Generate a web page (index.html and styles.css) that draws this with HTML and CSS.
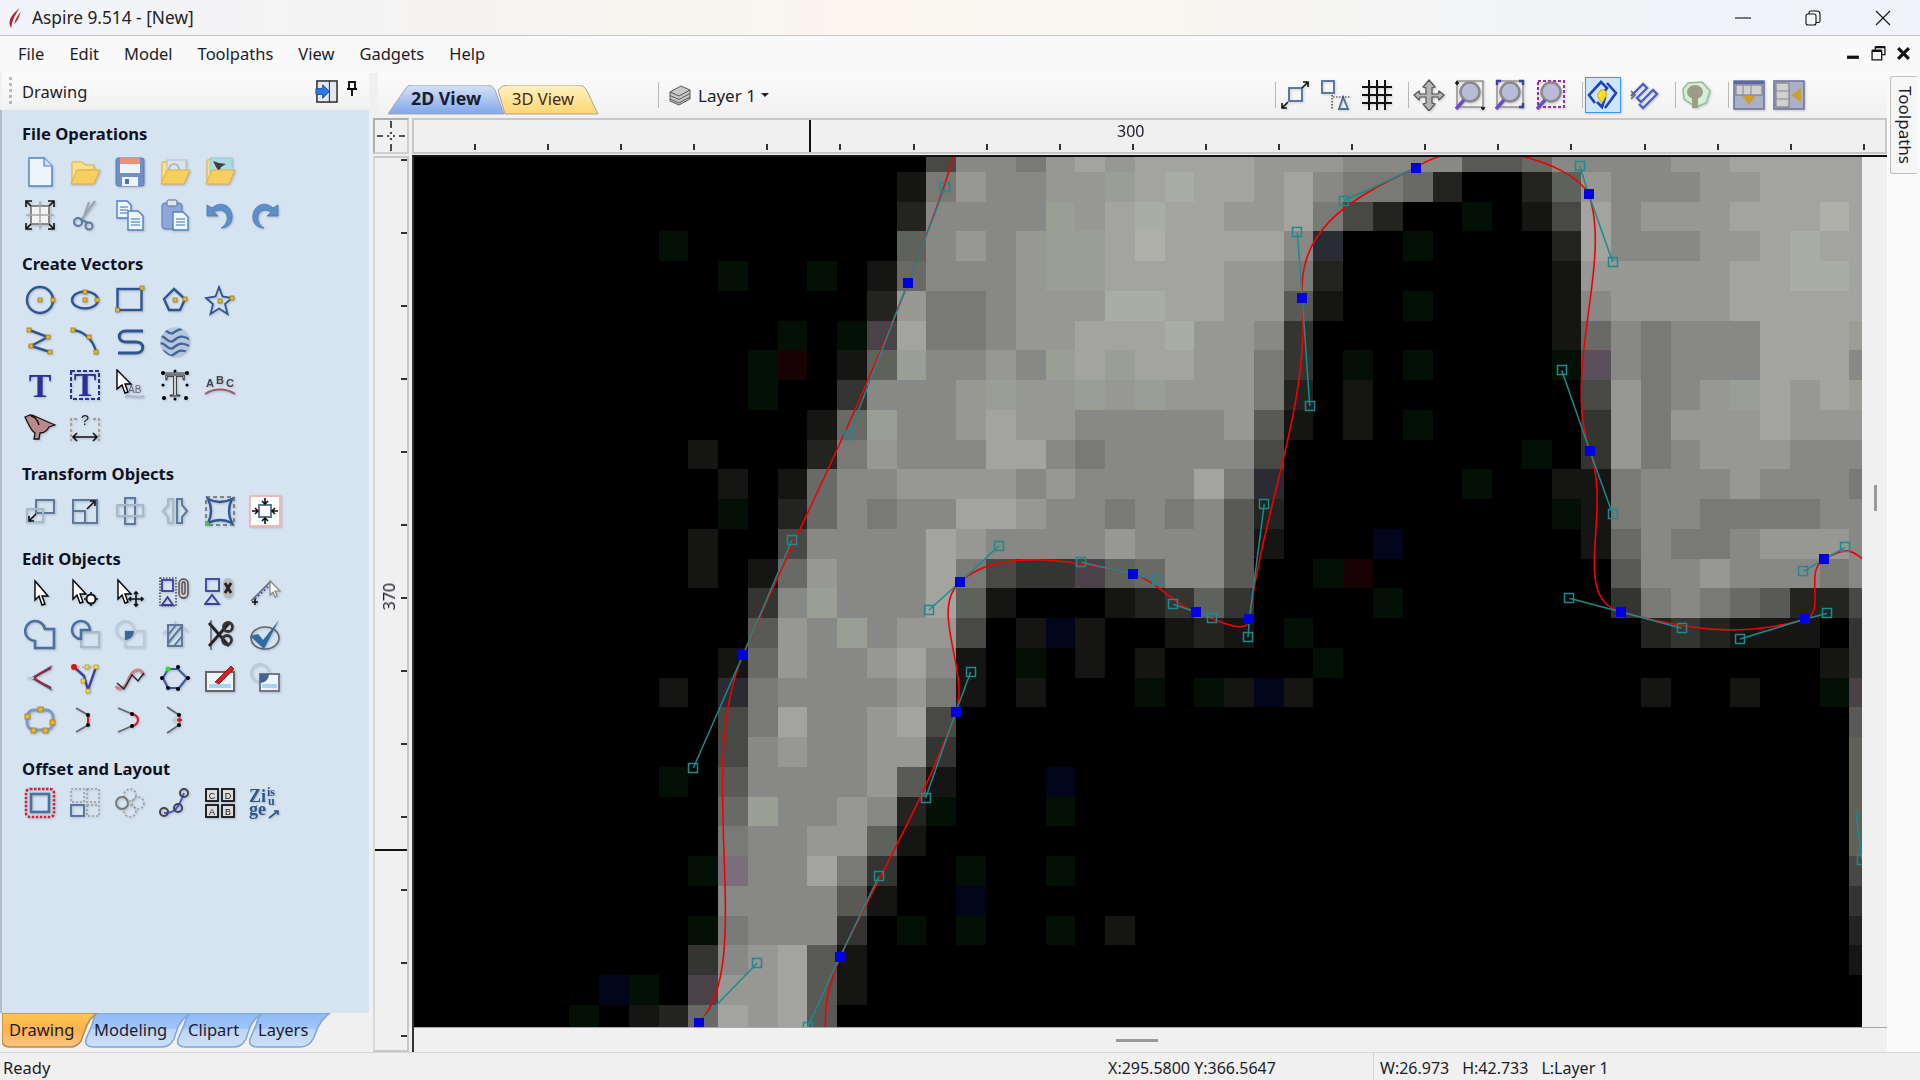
FILE: index.html
```html
<!DOCTYPE html>
<html>
<head>
    <title>Aspire 9.514 - [New]</title>
    <link rel="stylesheet" href="styles.css">
</head>
<body>
<div class="app">
    <div class="titlebar">
        <svg class="app-icon" viewBox="0 0 14 22"><path d="M12 0C7 4 2 9 1 15c-.4 2.500 .5 5 2 7C3 17 6 9 12 0z"/><path d="M13 4C10 8 7 13 6 18c3-3 6-8 7-14z"/></svg>
        <span class="app-title">Aspire 9.514 - [New]</span>
        <div class="win-btns">
            <svg class="win-min" viewBox="0 0 16 16"><path d="M0 8h16"/></svg>
            <svg class="win-max" viewBox="0 0 16 16"><rect x="1" y="4" width="10" height="11" rx="2"/><path d="M4 4V3c0-1 .8-2 2-2h6c1.500 0 3 1 3 3v7c0 1-.8 1.500-2 1.500h-2"/></svg>
            <svg class="win-close" viewBox="0 0 16 16"><path d="M1 1l14 14M15 1L1 15"/></svg>
        </div>
    </div>

    <div class="menubar">
        <span>File</span><span>Edit</span><span>Model</span><span>Toolpaths</span><span>View</span><span>Gadgets</span><span>Help</span>
        <div class="mdi-btns">
            <svg viewBox="0 0 14 14"><rect x="1" y="9" width="11" height="3" class="fill-dark"/></svg>
            <svg viewBox="0 0 14 14"><path d="M4 3.500V1h9v7h-2.500M1 4.500h9V13H1z" class="line-dark"/><path d="M4 1h9M1 4.500h9" class="line-thick"/></svg>
            <svg viewBox="0 0 14 14"><path d="M2 2l10 10M12 2L2 12" class="line-x"/></svg>
        </div>
    </div>

    <div class="workspace">
        <div class="left">
            <div class="panel-head">
                <span class="grip"></span>
                <span class="panel-name">Drawing</span>
                <svg class="head-ic" viewBox="0 0 24 24"><rect x="2" y="1" width="21" height="22" class="box"/><path d="M15 1v22" class="boxline"/><path d="M1 9h7V5l7 7-7 7v-4H1z" class="arrow-blue"/></svg>
                <svg class="pin-ic" viewBox="0 0 12 16"><path d="M3 1h6v7H3zM1 8h10M6 8v7" class="line-pin"/></svg>
            </div>
            <div class="panel-body">
                <div class="sec sec-file">
                    <div class="sec-title">File Operations</div>
                    <div class="icons">
                        <svg class="ic" viewBox="0 0 32 32"><path d="M5 2h15l8 8v20H5z" class="doc"/><path d="M20 2v8h8" class="doc-fold"/></svg>
                        <svg class="ic" viewBox="0 0 32 32"><path d="M3 27V6h10l3 3h9v5H9z" class="folder-back"/><path d="M2 28l6-14h23l-6 14z" class="folder"/></svg>
                        <svg class="ic" viewBox="0 0 32 32"><rect x="2" y="2" width="28" height="28" rx="2" class="floppy"/><rect x="6" y="2" width="20" height="6" class="floppy-red"/><rect x="6" y="8" width="20" height="9" class="floppy-white"/><rect x="8" y="21" width="16" height="9" class="floppy-white"/><rect x="11" y="23" width="4" height="5" class="floppy-dark"/></svg>
                        <svg class="ic" viewBox="0 0 32 32"><path d="M3 27V6h10l3 3h9v5H9z" class="folder-back"/><rect x="8" y="4" width="19" height="14" class="pic-pale"/><circle cx="15" cy="13" r="5" class="ring-grey"/><path d="M2 28l6-14h23l-6 14z" class="folder"/></svg>
                        <svg class="ic" viewBox="0 0 32 32"><path d="M3 27V4h10l3 3h9v7H9z" class="folder-back"/><rect x="6" y="2" width="22" height="15" class="pic-sky"/><path d="M9 5l6 2 7 1-5 3-2 5-3-5z" class="bird-dark"/><path d="M2 28l6-14h23l-6 14z" class="folder"/></svg>
                        <span></span>

                        <svg class="ic" viewBox="0 0 32 32"><rect x="7" y="7" width="18" height="18" class="sel-box"/><path d="M16 2v28M2 16h28" class="sel-grid"/><path d="M2 8V2h6M24 2h6v6M30 24v6h-6M8 30H2v-6M2 2l5 5M30 2l-5 5M30 30l-5-5M2 30l5-5" class="s-black"/></svg>
                        <svg class="ic" viewBox="0 0 32 32"><path d="M26 2L13 20M20 3l-6 17" class="blade"/><circle cx="9" cy="23" r="4" class="s-steel"/><circle cx="20" cy="27" r="3.500" class="s-steel"/><path d="M11 20l8 4" class="s-steel"/></svg>
                        <svg class="ic" viewBox="0 0 32 32"><path d="M3 2h10l4 4v13H3z" class="doc"/><path d="M6 8h8M6 11h8M6 14h8" class="s-doc"/><path d="M14 12h10l5 5v14H14z" class="doc"/><path d="M17 20h9M17 23h9M17 26h9" class="s-doc"/></svg>
                        <svg class="ic" viewBox="0 0 32 32"><rect x="3" y="4" width="20" height="26" rx="3" class="clip"/><rect x="8" y="1" width="10" height="6" rx="1.500" class="clip-top"/><path d="M14 13h10l5 5v13H14z" class="doc"/><path d="M17 20h9M17 23h9M17 26h9" class="s-doc"/></svg>
                        <svg class="ic" viewBox="0 0 32 32"><path d="M3 6v11h11l-4-4c6-4 12-1 13 4 1 5-2 10-6 12 8 0 12-6 11-13C27 7 17 1 8 9z" class="undo"/></svg>
                        <svg class="ic" viewBox="0 0 32 32"><path d="M29 6v11H18l4-4c-6-4-12-1-13 4-1 5 2 10 6 12-8 0-12-6-11-13C5 7 15 1 24 9z" class="undo"/></svg>
                    </div>
                </div>

                <div class="sec sec-create">
                    <div class="sec-title">Create Vectors</div>
                    <div class="icons">
                        <svg class="ic" viewBox="0 0 32 32"><circle cx="16" cy="16" r="13" class="s-blue"/><rect x="14" y="14" width="4" height="4" class="node"/><rect x="27" y="14" width="4" height="4" class="node"/></svg>
                        <svg class="ic" viewBox="0 0 32 32"><ellipse cx="16" cy="16" rx="13" ry="8.500" class="s-blue"/><rect x="14" y="14" width="4" height="4" class="node"/><rect x="14" y="6" width="4" height="4" class="node"/><rect x="26" y="14" width="4" height="4" class="node"/></svg>
                        <svg class="ic" viewBox="0 0 32 32"><rect x="3.500" y="5" width="24" height="21" class="s-blue"/><rect x="1.500" y="24" width="4" height="4" class="node"/><rect x="26" y="2" width="4" height="4" class="node"/></svg>
                        <svg class="ic" viewBox="0 0 32 32"><path d="M15 5l11 10-5 11H10L5 15z" class="s-blue"/><rect x="14" y="14" width="4" height="4" class="node"/><rect x="24" y="13" width="4" height="4" class="node"/></svg>
                        <svg class="ic" viewBox="0 0 32 32"><path d="M15 3l3.500 9.500L28 14l-7 6 2.500 10L15 24.500 6.500 30 9 20l-7-6 9.500-1.500z" class="s-blue-star"/><rect x="14" y="15" width="4" height="4" class="node"/><rect x="26" y="12" width="4" height="4" class="node"/></svg>
                        <span></span>

                        <svg class="ic" viewBox="0 0 32 32"><path d="M5 4l19 7L7 20l19 6" class="s-blue"/><rect x="3" y="2" width="4" height="4" class="node"/><rect x="22" y="9" width="4" height="4" class="node"/><rect x="5" y="18" width="4" height="4" class="node"/><rect x="24" y="24" width="4" height="4" class="node"/></svg>
                        <svg class="ic" viewBox="0 0 32 32"><path d="M4 4c9 1 20 8 23 22" class="s-blue"/><rect x="2" y="2" width="4" height="4" class="node"/><rect x="18" y="9" width="4" height="4" class="node"/><rect x="25" y="24" width="4" height="4" class="node"/></svg>
                        <svg class="ic" viewBox="0 0 32 32"><path d="M29 5H12C3 5 3 16 12 16h10c9 0 9 11 0 11H4" class="s-thick"/></svg>
                        <svg class="ic" viewBox="0 0 32 32"><defs><clipPath id="wave-clip"><circle cx="16" cy="16" r="14.500"/></clipPath></defs><g clip-path="url(#wave-clip)"><rect width="32" height="32" class="wave-bg"/><path d="M0 5c5-6 9 5 14 2s8-7 18-1M0 12c5-6 9 7 14 3s8-7 18-1M0 19c5-6 9 7 14 3s8-7 18-1M0 26c5-6 9 7 14 3s8-7 18-1" class="s-wave"/></g></svg>
                        <span></span><span></span>

                        <svg class="ic" viewBox="0 0 32 32"><text x="16" y="28" class="t-big">T</text></svg>
                        <svg class="ic" viewBox="0 0 32 32"><rect x="2" y="2" width="28" height="28" class="s-dash"/><text x="16" y="27" class="t-big">T</text></svg>
                        <svg class="ic" viewBox="0 0 32 32"><path d="M3 1v19l5-4 3 8 3-1-3-8h6z" class="ptr"/><text x="14" y="24" class="t-ab">AB</text><path d="M11 28c6-3 10 2 19-1" class="s-pale"/></svg>
                        <svg class="ic" viewBox="0 0 32 32"><path d="M4 4h24" class="s-thin"/><text x="16" y="27" class="t-outline">T</text><circle cx="4" cy="4" r="2" class="dot"/><circle cx="16" cy="2" r="1.500" class="dot"/><circle cx="28" cy="4" r="2" class="dot"/><circle cx="4" cy="16" r="1.500" class="dot"/><circle cx="28" cy="16" r="1.500" class="dot"/><circle cx="5" cy="29" r="2" class="dot"/><circle cx="16" cy="30" r="1.500" class="dot"/><circle cx="27" cy="29" r="2" class="dot"/></svg>
                        <svg class="ic" viewBox="0 0 32 32"><text x="2" y="18" class="t-abc">A</text><text x="12" y="15" class="t-abc">B</text><text x="22" y="18" class="t-abc">C</text><path d="M1 25c9-6 21-6 30 0" class="s-arc"/></svg>
                        <span></span>

                        <svg class="ic" viewBox="0 0 32 32"><path d="M1 6l5-2c4 0 6 2 9 3l9 4 7 3-6 2c-2 4-5 6-9 6l-1 6h-5l1-6C7 20 4 12 1 6z" class="bird"/><path d="M7 5c4 1 7 5 8 9" class="s-black"/></svg>
                        <svg class="ic" viewBox="0 0 32 32"><text x="16" y="14" class="t-q">?</text><path d="M2 15V8h7M30 15V8h-7M2 18v12M30 18v12" class="s-brown"/><path d="M4 26h24M8 22l-4 4 4 4M24 22l4 4-4 4" class="s-black"/></svg>
                    </div>
                </div>

                <div class="sec sec-transform">
                    <div class="sec-title">Transform Objects</div>
                    <div class="icons">
                        <svg class="ic" viewBox="0 0 32 32"><rect x="12" y="5" width="18" height="13" class="s-steel"/><rect x="3" y="14" width="16" height="13" class="s-pale"/><path d="M12 19l-7 7M5 21v5h5" class="s-black"/></svg>
                        <svg class="ic" viewBox="0 0 32 32"><rect x="4" y="5" width="24" height="23" class="s-steel"/><path d="M4 16h12v12" class="s-steel"/><path d="M18 14l8-8M21 6h5v5" class="s-black"/></svg>
                        <svg class="ic" viewBox="0 0 32 32"><rect x="11" y="3" width="10" height="26" class="s-steel"/><rect x="3" y="10" width="26" height="11" class="s-pale"/></svg>
                        <svg class="ic" viewBox="0 0 32 32"><path d="M14 4H9v6l-5 6 5 6v6h5z" class="s-pale"/><path d="M18 4h5v6l5 6-5 6v6h-5z" class="s-steel"/></svg>
                        <svg class="ic" viewBox="0 0 32 32"><rect x="2" y="2" width="28" height="28" class="s-greydash"/><path d="M4 4c8 4 16 4 24 0-4 8-4 16 0 24-8-4-16-4-24 0 4-8 4-16 0-24z" class="s-blue"/><rect x="1" y="27" width="4" height="4" class="green"/></svg>
                        <svg class="ic fit" viewBox="0 0 32 32"><rect x="1" y="1" width="30" height="30" class="fit-frame"/><rect x="10" y="10" width="12" height="12" class="s-steel"/><path d="M16 3v6M16 23v6M3 16h6M23 16h6M13 6l3 3 3-3M13 26l3-3 3 3M6 13l3 3-3 3M26 13l-3 3 3 3" class="s-black"/></svg>
                    </div>
                </div>

                <div class="sec sec-edit">
                    <div class="sec-title">Edit Objects</div>
                    <div class="icons">
                        <svg class="ic" viewBox="0 0 32 32"><path d="M11 4v19l4-4 3 9 3-1-3-8h6z" class="ptr"/></svg>
                        <svg class="ic" viewBox="0 0 32 32"><path d="M4 3v19l4-4 3 8 3-1-3-8h6z" class="ptr"/><circle cx="22" cy="22" r="4.500" class="s-blackw"/><path d="M22 15v3M22 26v3M15 22h3M26 22h3" class="s-black"/></svg>
                        <svg class="ic" viewBox="0 0 32 32"><path d="M4 3v19l4-4 3 8 3-1-3-8h6z" class="ptr"/><path d="M22 15v14M15 22h14M20 17l2-2 2 2M20 27l2 2 2-2M17 20l-2 2 2 2M27 20l2 2-2 2" class="s-black"/></svg>
                        <svg class="ic" viewBox="0 0 32 32"><rect x="1" y="1" width="16" height="28" class="s-dots"/><rect x="3" y="3" width="11" height="11" class="s-navy"/><path d="M3 28l5.500-8 5.500 8z" class="s-navy"/><rect x="20" y="2" width="9" height="19" rx="4.500" class="s-chain"/><rect x="23" y="5" width="3" height="12" rx="1.500" class="s-chain"/></svg>
                        <svg class="ic" viewBox="0 0 32 32"><rect x="2" y="2" width="13" height="12" class="s-navy"/><path d="M1 27l7-9 7 9z" class="s-navy"/><rect x="19" y="1" width="10" height="20" rx="5" class="chain-bg"/><path d="M21 6l6 10M27 6l-6 10" class="s-heavy"/></svg>
                        <svg class="ic" viewBox="0 0 32 32"><path d="M2 24L22 4" class="s-grey"/><path d="M6 22L20 9" class="s-bluedash"/><path d="M6 22v6M3 25h6" class="s-black"/><path d="M21 4v14l3-3 2 5 2-1-2-5h5z" class="ptr-grey"/></svg>

                        <svg class="ic" viewBox="0 0 32 32"><path d="M11 22a10 10 0 1 1 10-12h9v19H11z" class="s-steelb"/></svg>
                        <svg class="ic" viewBox="0 0 32 32"><rect x="12" y="13" width="18" height="15" class="s-pale"/><path d="M12 20a9 9 0 1 1 9-9h-9z" class="s-steelb"/></svg>
                        <svg class="ic" viewBox="0 0 32 32"><circle cx="11" cy="11" r="9" class="s-paler"/><rect x="11" y="12" width="19" height="16" class="s-paler"/><path d="M11 12h9c0 5-4 9-9 9z" class="s-steelf"/></svg>
                        <svg class="ic" viewBox="0 0 32 32"><rect x="9" y="6" width="14" height="21" class="s-steel"/><path d="M9 16l8-10M9 24l14-17M15 27l8-10" class="s-steel"/><path d="M4 15l3-3M25 9l4 4M16 2v3" class="s-paler"/></svg>
                        <svg class="ic" viewBox="0 0 32 32"><path d="M5 4l20 23M26 3L5 27" class="s-heavy"/><circle cx="24" cy="8" r="4.500" class="s-pink"/><circle cx="23" cy="21" r="4.500" class="s-pink"/><path d="M7 1v30" class="s-thin"/></svg>
                        <svg class="ic" viewBox="0 0 32 32"><ellipse cx="16" cy="19" rx="14" ry="11" class="s-grey"/><path d="M1 17l8-2 5 6L30 1 15 30z" class="check"/></svg>

                        <svg class="ic" viewBox="0 0 32 32"><path d="M28 4L8 16l20 12" class="s-steel"/><path d="M27 6C20 10 14 12 10 16c4 4 10 6 17 10" class="s-maroon"/><path d="M10 16H3" class="s-paler"/></svg>
                        <svg class="ic" viewBox="0 0 32 32"><path d="M5 5l10 9 4 14L27 5" class="s-navyb"/><path d="M5 5h22" class="s-reddash"/><circle cx="5" cy="5" r="3" class="red-dot"/><rect x="16" y="3" width="4" height="4" class="ynode"/><rect x="25" y="3" width="4" height="4" class="ynode"/><rect x="12" y="17" width="4" height="4" class="ynode"/><rect x="17" y="27" width="4" height="4" class="ynode"/></svg>
                        <svg class="ic" viewBox="0 0 32 32"><path d="M2 24c3 5 8 3 11-3 2-5 4-12 11-13 3 0 5 3 6 6" class="s-pinkw"/><path d="M3 21l7 6 8-14 6 6 6-8" class="s-thin2"/></svg>
                        <svg class="ic" viewBox="0 0 32 32"><path d="M4 16l5-9h10l9 9-8 10h-11z" class="s-navyw"/><circle cx="9" cy="7" r="2.500" class="green-dot"/><circle cx="19" cy="5" r="2" class="dot"/><circle cx="29" cy="16" r="2" class="dot"/><circle cx="19" cy="27" r="2" class="dot"/><circle cx="9" cy="26" r="2" class="dot"/><circle cx="3" cy="16" r="2" class="dot"/></svg>
                        <svg class="ic" viewBox="0 0 32 32"><rect x="2" y="10" width="28" height="19" class="pic-frame"/><rect x="5" y="22" width="22" height="4" class="pic-band"/><path d="M11 20L27 4l3 3-15 15z" class="pencil"/></svg>
                        <svg class="ic" viewBox="0 0 32 32"><circle cx="11" cy="11" r="9" class="s-paler"/><rect x="11" y="12" width="19" height="17" class="pic-frame2"/><rect x="13" y="22" width="15" height="4" class="pic-band"/><path d="M11 12h9c0 5-4 9-9 9z" class="s-steelf"/></svg>

                        <svg class="ic" viewBox="0 0 32 32"><rect x="3" y="6" width="26" height="20" rx="7" class="s-steelc"/><rect x="1" y="10" width="5" height="5" class="node"/><rect x="14" y="3" width="5" height="5" class="node"/><rect x="26" y="16" width="5" height="5" class="node"/><rect x="19" y="24" width="5" height="5" class="node"/><rect x="7" y="24" width="5" height="5" class="node"/></svg>
                        <svg class="ic" viewBox="0 0 32 32"><path d="M7 4l12 7M7 28l12-7" class="s-grey"/><path d="M19 11v10" class="s-red"/><circle cx="19" cy="11" r="2" class="dot"/><circle cx="19" cy="21" r="2" class="dot"/></svg>
                        <svg class="ic" viewBox="0 0 32 32"><path d="M4 4l14 6M4 28l14-6" class="s-grey"/><path d="M18 10c8 2 8 10 0 12" class="s-red"/><circle cx="18" cy="10" r="2" class="dot"/><circle cx="18" cy="22" r="2" class="dot"/></svg>
                        <svg class="ic" viewBox="0 0 32 32"><path d="M8 3l12 8M8 29l12-8" class="s-grey"/><path d="M20 11l-6 5 6 5" class="s-paler"/><circle cx="20" cy="11" r="2" class="dot"/><circle cx="20" cy="21" r="2" class="dot"/><path d="M23 16h-5M20.500 13.500v5" class="s-red"/></svg>
                        <span></span><span></span>
                    </div>
                </div>

                <div class="sec sec-offset">
                    <div class="sec-title">Offset and Layout</div>
                    <div class="icons">
                        <svg class="ic" viewBox="0 0 32 32"><rect x="2" y="2" width="28" height="28" rx="4" class="s-redfat"/><rect x="7" y="7" width="18" height="18" class="s-steelb"/></svg>
                        <svg class="ic" viewBox="0 0 32 32"><rect x="2" y="2" width="13" height="13" class="s-greydash2"/><rect x="18" y="2" width="12" height="13" class="s-greydash2"/><rect x="18" y="18" width="12" height="11" class="s-greydash2"/><rect x="2" y="18" width="13" height="11" class="s-steel2"/></svg>
                        <svg class="ic" viewBox="0 0 32 32"><circle cx="16" cy="8" r="6" class="s-greydash2"/><circle cx="16" cy="24" r="6" class="s-greydash2"/><circle cx="24" cy="16" r="6" class="s-greydash2"/><circle cx="8" cy="16" r="6" class="s-greyw"/></svg>
                        <svg class="ic" viewBox="0 0 32 32"><path d="M5 26c10 0 14-3 20-20" class="s-violet"/><circle cx="5" cy="25" r="4" class="s-ring"/><circle cx="19" cy="21" r="4" class="s-ring"/><circle cx="25" cy="6" r="4" class="s-ring"/></svg>
                        <svg class="ic" viewBox="0 0 32 32"><rect x="2" y="2" width="12" height="12" class="cd-box"/><rect x="18" y="2" width="12" height="12" class="cd-box"/><rect x="2" y="18" width="12" height="12" class="cd-box"/><rect x="18" y="18" width="12" height="12" class="cd-box"/><text x="8" y="11.500" class="t-tile">C</text><text x="24" y="11.500" class="t-tile">D</text><text x="8" y="27.500" class="t-tile">A</text><text x="24" y="27.500" class="t-tile">B</text></svg>
                        <svg class="ic" viewBox="0 0 32 32"><text x="0" y="15" class="t-zig">Zi</text><text x="18" y="9" class="t-zig2">is</text><text x="0" y="28" class="t-zig">ge</text><text x="19" y="18" class="t-zig2">u</text><path d="M20 31l9-7M25 24h4v4" class="s-blue-thin"/></svg>
                    </div>
                </div>
            </div>
            <svg class="panel-tabs" viewBox="0 0 340 39">
                <defs>
                    <linearGradient id="tab-blue" x1="0" y1="0" x2="0" y2="1"><stop offset="0" stop-color="#8ebbf8"/><stop offset=".46" stop-color="#a0c5f8"/><stop offset=".47" stop-color="#bcd4f6"/><stop offset="1" stop-color="#cfe0f7"/></linearGradient>
                    <linearGradient id="tab-orange" x1="0" y1="0" x2="0" y2="1"><stop offset="0" stop-color="#ffc656"/><stop offset=".5" stop-color="#ffb24c"/><stop offset="1" stop-color="#ffc583"/></linearGradient>
                </defs>
                <path d="M260 0h68q-8 6-12 14l-4 10q-4 10-14 10h-42q-10 0-8-8l6-14q2-8 6-12z" class="tab-b"/>
                <path d="M188 0h72q-8 6-12 14l-4 12q-4 8-12 8h-48q-10 0-8-8l6-14q2-8 6-12z" class="tab-b"/>
                <path d="M94 0h94q-8 6-12 14l-4 12q-4 8-12 8H92q-10 0-8-8l6-14q2-8 4-12z" class="tab-b"/>
                <path d="M0 0h95q-7 5-10 12l-6 16q-4 6-11 6H8q-8 0-8-7z" class="tab-o"/>
                <text x="7" y="23" class="tab-text">Drawing</text>
                <text x="92" y="23" class="tab-text">Modeling</text>
                <text x="186" y="23" class="tab-text">Clipart</text>
                <text x="256" y="23" class="tab-text">Layers</text>
            </svg>
        </div>

        <div class="main">
            <div class="view-toolbar">
                <svg class="view-tabs" viewBox="0 0 220 32">
                    <defs>
                        <linearGradient id="tab-2d" x1="0" y1="0" x2="0" y2="1"><stop offset="0" stop-color="#d6e2f8"/><stop offset="1" stop-color="#81a6e8"/></linearGradient>
                        <linearGradient id="tab-3d" x1="0" y1="0" x2="0" y2="1"><stop offset="0" stop-color="#fff1c4"/><stop offset="1" stop-color="#ffd672"/></linearGradient>
                    </defs>
                    <path d="M112 5q4-5 10-5h70q6 0 9 6l11 23H119z" class="tab-3d"/>
                    <path d="M2 29L20 3q2-3 6-3h74q6 0 9 5l9 24z" class="tab-2d"/>
                    <text x="25" y="20" class="tab-text tab-bold">2D View</text>
                    <text x="126" y="20" class="tab-text tab-brown">3D View</text>
                </svg>
                <span class="sep sep-layer"></span>
                <svg class="layer-ic" viewBox="0 0 24 22"><path d="M2 8l11-6 9 4v9l-11 6-9-4z" class="slab"/><path d="M2 8l9 4 11-6M2 11.500l9 4 11-6M2 15l9 4 11-6" class="slab-line"/></svg>
                <span class="layer-name">Layer 1</span>
                <span class="caret"></span>

                <span class="sep sep-tools"></span>
                <span class="tool"><svg class="ic-top" viewBox="0 0 32 32"><rect x="9" y="9" width="13" height="13" class="s-steel2"/><path d="M8 23l-6 6M2 24v5h5M22 9l6-6M23 3h5v5" class="s-black"/></svg></span>
                <span class="tool"><svg class="ic-top" viewBox="0 0 32 32"><rect x="2" y="2" width="12" height="12" class="s-steel2"/><path d="M19 30L23 18l5 12z" class="s-steel2"/><path d="M13 18h17M12 16v14" class="s-dots"/></svg></span>
                <span class="tool"><svg class="ic-top" viewBox="0 0 32 32"><path d="M8 1v30M16 1v30M24 1v30M1 8h30M1 16h30M1 24h30" class="s-grid"/></svg></span>
                <span class="sep"></span>
                <span class="tool"><svg class="ic-top" viewBox="0 0 32 32"><path d="M16 1l6 7-3 1v6h6l1-3 5 4-5 5-1-3h-6v6l3 1-6 7-6-7 3-1v-6H7l-1 3-5-5 5-4 1 3h6V9l-3-1z" class="pan"/></svg></span>
                <span class="tool"><svg class="ic-top" viewBox="0 0 32 32"><rect x="3" y="2" width="26" height="26" class="s-greyl"/><circle cx="16" cy="13" r="9.500" class="lens"/><path d="M10 21L2 30" class="handle"/><path d="M3 2v4M1 4h4M29 28v3M27 29h4" class="s-black"/></svg></span>
                <span class="tool"><svg class="ic-top" viewBox="0 0 32 32"><rect x="3" y="2" width="26" height="26" class="s-greyl"/><path d="M3 6V2h4M25 2h4v4M25 28h4v-4" class="s-navyb"/><circle cx="16" cy="13" r="9.500" class="lens"/><path d="M10 21L2 30" class="handle"/></svg></span>
                <span class="tool"><svg class="ic-top" viewBox="0 0 32 32"><rect x="3" y="2" width="26" height="26" class="s-magenta"/><circle cx="16" cy="13" r="9.500" class="lens"/><path d="M10 21L2 30" class="handle"/></svg></span>
                <span class="sep"></span>
                <span class="tool tool-on"><svg class="ic-top" viewBox="0 0 32 32"><path d="M8 24L2 16 14 3l6 6-6 8 4 2-3 9-5-5" class="s-zig"/><path d="M20 4l9 10-11 15" class="s-zig"/><path d="M13 12c3-3 8 0 6 5l-4 7-4-6c-1-2 0-4 2-6z" class="bulb"/></svg></span>
                <span class="tool"><svg class="ic-top" viewBox="0 0 32 32"><path d="M3 17L15 5l4 4-10 10 4 4L25 11l4 4-14 14-4-4" class="s-zig2"/><path d="M3 12l4 4-4 4" class="s-grey"/></svg></span>
                <span class="sep"></span>
                <span class="tool"><svg class="ic-top" viewBox="0 0 32 32"><path d="M8 4l14-1 8 9-4 12-10 4L4 20 3 10z" class="s-gtree"/><ellipse cx="15" cy="13" rx="8" ry="7" class="tree"/><rect x="12" y="18" width="6" height="11" class="tree"/></svg></span>
                <span class="sep"></span>
                <span class="tool"><svg class="ic-top" viewBox="0 0 32 32"><rect x="1" y="2" width="30" height="28" class="split"/><rect x="1" y="2" width="30" height="3" class="split-top"/><rect x="3" y="6" width="26" height="10" class="split-grey"/><path d="M10 6v10M18 6v10" class="s-split"/><path d="M9 17h14l-7 9z" class="gold"/></svg></span>
                <span class="tool"><svg class="ic-top" viewBox="0 0 32 32"><rect x="1" y="2" width="30" height="28" class="split"/><rect x="3" y="4" width="13" height="24" class="split-grey"/><path d="M3 12h13M3 20h13" class="s-split"/><path d="M18 16l10-7v14z" class="gold"/></svg></span>
            </div>

            <div class="ruler-row">
                <div class="corner">
                    <svg viewBox="0 0 32 32"><path d="M16 1v7M16 12v2M16 18v2M16 24v7M2 16h6M12 16h2M18 16h2M24 16h6" class="s-cross"/></svg>
                </div>
                <div class="ruler-top">
                    <span class="mark-top"></span>
                    <span class="ruler-label">300</span>
                </div>
            </div>

            <div class="view-row">
                <div class="ruler-left">
                    <span class="mark-left"></span>
                    <span class="ruler-label-v">370</span>
                </div>
                <div class="canvas-wrap">
                    <div class="canvas-row">
                        <canvas id="view" width="1448" height="870"></canvas>
                        <div class="vgrip"><span></span></div>
                    </div>
                    <div class="hgrip"><span></span></div>
                </div>
            </div>
        </div>

        <div class="side">
            <div class="side-tab">Toolpaths</div>
        </div>
    </div>

    <div class="statusbar">
        <span class="st-ready">Ready</span>
        <span class="st-pos">X:295.5800 Y:366.5647</span>
        <span class="st-size"><span>W:26.973</span><span>H:42.733</span><span>L:Layer 1</span></span>
    </div>
</div>
<script src="mosaic.js"></script>
</body>
</html>
```

FILE: styles.css
```css
* {
    box-sizing: border-box;
}
body {
    margin: 0;
    font-family: "Noto Sans", "Open Sans", sans-serif;
    font-size: 16px;
    color: #1c1c28;
    background-color: #f0f0f0;
}
.app {
    width: 1920px;
    height: 1080px;
    display: flex;
    flex-direction: column;
    overflow: hidden;
}

/* title bar */
.titlebar {
    height: 36px;
    flex: none;
    display: flex;
    align-items: center;
    padding-left: 8px;
    border-bottom: 1px solid #c6c6c6;
    background: linear-gradient(90deg, #f2f4fa 0%, #f6f4f2 25%, #faf6ee 45%, #f9f6f0 60%, #f2f4f8 80%, #f1f3f9 100%);
}
.app-icon {
    width: 14px;
    height: 20px;
    fill: #b42330;
}
.app-title {
    margin-left: 10px;
    font-size: 17.300px;
    color: #222;
}
.win-btns {
    margin-left: auto;
    display: flex;
    align-items: center;
    gap: 54px;
    padding-right: 29px;
}
.win-btns svg {
    width: 16px;
    height: 16px;
    fill: none;
    stroke: #111;
    stroke-width: 1.1;
}

/* menu */
.menubar {
    height: 37px;
    flex: none;
    display: flex;
    align-items: center;
    gap: 25px;
    padding: 0 0 2px 18px;
    background-color: #f9f9f9;
    font-size: 16.500px;
}
.mdi-btns {
    margin-left: auto;
    display: flex;
    gap: 10px;
    padding-right: 9px;
}
.mdi-btns svg {
    width: 15px;
    height: 15px;
}
.fill-dark {
    fill: #111;
}
.line-dark {
    fill: none;
    stroke: #111;
    stroke-width: 1.2;
}
.line-thick {
    fill: none;
    stroke: #111;
    stroke-width: 2.4;
}
.line-x {
    fill: none;
    stroke: #111;
    stroke-width: 3;
}

/* layout */
.workspace {
    flex: 1;
    display: flex;
    min-height: 0;
    background-color: #f0f0f0;
}
.left {
    width: 369px;
    flex: none;
    display: flex;
    flex-direction: column;
}
.panel-head {
    height: 37px;
    flex: none;
    margin-left: 2px;
    display: flex;
    align-items: center;
    background: linear-gradient(#fbfbfb, #f1f1f1);
}
.grip {
    width: 3px;
    height: 30px;
    margin-left: 7px;
    background: repeating-linear-gradient(#bbb 0 3px, transparent 3px 6px);
}
.panel-name {
    margin-left: 10px;
    font-size: 16.500px;
}
.head-ic {
    width: 23px;
    height: 23px;
    margin-left: auto;
}
.box {
    fill: #dfe6f0;
    stroke: #222;
    stroke-width: 1.5;
}
.boxline {
    stroke: #222;
}
.arrow-blue {
    fill: #2f7ae0;
    stroke: #1b4f98;
}
.pin-ic {
    width: 12px;
    height: 16px;
    margin: 0 11px 6px 8px;
}
.line-pin {
    fill: #fff;
    stroke: #000;
    stroke-width: 1.8;
}
.panel-body {
    flex: 1;
    padding: 14px 0 0 15px;
    border-left: 2px solid #b3bbc7;
    background-color: #d6e4f2;
}
.sec {
    margin-bottom: 18px;
}
.sec-title {
    margin: 0 0 5px 5px;
    font-size: 16.600px;
    line-height: 20px;
    font-weight: 700;
    color: #0d1324;
}
.sec-file .sec-title {
    margin-bottom: 7px;
}
.sec-create {
    margin-bottom: 16px;
}
.sec-transform {
    margin-bottom: 17px;
}
.sec-edit .sec-title,
.sec-offset .sec-title {
    margin-bottom: 3px;
}
.icons {
    display: grid;
    grid-template-columns: repeat(6, 45px);
    grid-auto-rows: 42.400px;
}
.ic {
    width: 32px;
    height: 32px;
    align-self: center;
    justify-self: center;
    filter: drop-shadow(1px 1px 1px rgba(60, 70, 90, .28));
}
.panel-tabs {
    width: 340px;
    height: 39px;
    flex: none;
    margin-left: 2px;
}
.tab-text {
    font-family: "Noto Sans", sans-serif;
    font-size: 16.500px;
    fill: #1c1c30;
}
.tab-bold {
    font-size: 17.800px;
    font-weight: 700;
}
.tab-brown {
    fill: #3c2c18;
}
.tab-b {
    fill: url(#tab-blue);
    stroke: #7ba5dc;
    stroke-width: 1.5;
}
.tab-o {
    fill: url(#tab-orange);
    stroke: #b58a4a;
    stroke-width: 1.5;
}
.tab-2d {
    fill: url(#tab-2d);
    stroke: #a3a8b0;
}
.tab-3d {
    fill: url(#tab-3d);
    stroke: #a8a49a;
}

/* view */
.main {
    flex: 1;
    min-width: 0;
    margin-left: 4px;
    display: flex;
    flex-direction: column;
}
.view-toolbar {
    height: 44px;
    flex: none;
    margin-left: 5px;
    padding-right: 77.500px;
    display: flex;
    align-items: center;
    background: linear-gradient(#fbfbfb, #f1f1f1);
}
.view-tabs {
    width: 220px;
    height: 32px;
    margin: 12px 0 0 8px;
    flex: none;
}
.sep {
    width: 1px;
    height: 26px;
    flex: none;
    margin-left: 11px;
    background-color: #b8b8b8;
}
.sep-layer {
    margin-left: 52px;
}
.layer-ic {
    width: 24px;
    height: 22px;
    margin-left: 9px;
}
.slab {
    fill: #c9c9c9;
    stroke: #555;
}
.slab-line {
    fill: none;
    stroke: #555;
}
.layer-name {
    margin-left: 6px;
    font-size: 17px;
}
.caret {
    margin: 0 0 0 5px;
    border-left: 4px solid transparent;
    border-right: 4px solid transparent;
    border-top: 4px solid #222;
}
.sep-tools {
    margin-left: auto;
}
.tool {
    width: 40.500px;
    height: 36px;
    flex: none;
    display: flex;
    align-items: center;
    justify-content: center;
}
.ic-top {
    width: 32px;
    height: 32px;
    filter: drop-shadow(1px 1px 1px rgba(60, 60, 80, .25));
}
.tool-on .ic-top {
    width: 34px;
    height: 34px;
    padding: 1px;
    outline: 1px solid #3a9bf0;
    background-color: #cde6fb;
}

.ruler-row {
    height: 36px;
    flex: none;
    margin-top: 1px;
    display: flex;
    gap: 3px;
}
.corner {
    width: 36px;
    flex: none;
    border: 2px solid #aeaeae;
    border-right-color: #d0d0d0;
    border-bottom-color: #d0d0d0;
}
.corner svg {
    width: 32px;
    height: 32px;
}
.s-cross {
    fill: none;
    stroke: #222;
    stroke-width: 1.6;
}
.ruler-top {
    flex: 1;
    position: relative;
    border: 2px solid #c8c8c8;
    background-image: repeating-linear-gradient(90deg, #333 0 2px, transparent 2px 73.100px);
    background-size: 100% 6px;
    background-position: 59.500px 24px;
    background-repeat: no-repeat;
}
.mark-top {
    position: absolute;
    left: 395px;
    top: 0;
    bottom: 0;
    width: 2px;
    background-color: #111;
}
.ruler-label {
    position: absolute;
    left: 703px;
    top: 0;
    font-size: 16px;
}
.view-row {
    flex: 1;
    min-height: 0;
    display: flex;
    gap: 3px;
    margin-top: 1px;
}
.ruler-left {
    width: 36px;
    flex: none;
    position: relative;
    margin-top: 1px;
    border: 2px solid #c8c8c8;
    border-left-color: #d8d8d8;
    background-image: repeating-linear-gradient(#333 0 2px, transparent 2px 73px);
    background-size: 6px 100%;
    background-position: 26px 1px;
    background-repeat: no-repeat;
}
.mark-left {
    position: absolute;
    left: 0;
    right: 0;
    top: 691px;
    height: 2px;
    background-color: #111;
}
.ruler-label-v {
    position: absolute;
    left: 3px;
    top: 425px;
    font-size: 16px;
    writing-mode: vertical-rl;
    transform: rotate(180deg);
}
.canvas-wrap {
    flex: 1;
    min-width: 0;
    display: flex;
    flex-direction: column;
    border-top: 2px solid #111;
    border-left: 2px solid #333;
}
.canvas-row {
    display: flex;
    height: 870px;
    flex: none;
}
#view {
    display: block;
    width: 1448px;
    height: 870px;
}
.vgrip {
    flex: 1;
    display: flex;
    align-items: center;
    justify-content: center;
    padding: 0 0 189px 2px;
}
.vgrip span {
    width: 3px;
    height: 26px;
    background-color: #999;
}
.hgrip {
    flex: 1;
    padding: 11px 0 0 702px;
    border-top: 1px solid #a8a8a8;
}
.hgrip span {
    display: block;
    width: 42px;
    height: 3px;
    background-color: #999;
}
.side {
    width: 33px;
    flex: none;
    padding: 3px 0 0 3px;
    background-color: #fafafa;
}
.side-tab {
    height: 98px;
    display: flex;
    align-items: center;
    justify-content: center;
    padding-left: 3px;
    writing-mode: vertical-rl;
    font-size: 17px;
    border: 1px solid #c0c0c0;
    border-right: 0;
    border-radius: 3px 0 0 3px;
    background-color: #f6f6f6;
}

/* status */
.statusbar {
    height: 28px;
    flex: none;
    display: flex;
    align-items: center;
    border-top: 1px solid #d8d8d8;
    background-color: #f0f0f0;
}
.st-ready {
    width: 1108px;
    padding: 2px 0 0 3px;
    font-size: 16.500px;
}
.st-pos {
    width: 266px;
    height: 100%;
    display: flex;
    align-items: center;
    padding-top: 2px;
    border-right: 1px solid #d4d4d4;
}
.st-size {
    display: flex;
    gap: 13px;
    margin-left: 6px;
    padding-top: 2px;
}

/* icon strokes */
.s-blue { fill: none; stroke: #2f5590; stroke-width: 2.400; }
.s-blue-star { fill: none; stroke: #2f5590; stroke-width: 1.800; }
.s-blue-thin { fill: none; stroke: #2f5590; stroke-width: 1.600; }
.s-thick { fill: none; stroke: #2f5590; stroke-width: 3; }
.s-steel { fill: none; stroke: #5f789c; stroke-width: 2; }
.s-steel2 { fill: none; stroke: #4f6d97; stroke-width: 1.800; }
.s-steelb { fill: none; stroke: #4b6f9f; stroke-width: 2.600; }
.s-steelc { fill: none; stroke: #7f9ac0; stroke-width: 3; }
.s-steelf { fill: #3f6596; stroke: none; }
.s-pale { fill: none; stroke: #aab8c8; stroke-width: 2; }
.s-paler { fill: none; stroke: #bcc9d8; stroke-width: 1.800; }
.s-black { fill: none; stroke: #111; stroke-width: 1.600; }
.s-blackw { fill: #fff; stroke: #111; stroke-width: 2; }
.s-thin { fill: none; stroke: #333; stroke-width: 1; }
.s-thin2 { fill: none; stroke: #222; stroke-width: 1.400; }
.s-grey { fill: none; stroke: #666; stroke-width: 1.600; }
.s-greyl { fill: none; stroke: #8b8b8b; stroke-width: 1.400; }
.s-greyw { fill: none; stroke: #777; stroke-width: 1.800; }
.s-greydash { fill: none; stroke: #666; stroke-width: 1.500; stroke-dasharray: 4 3; }
.s-greydash2 { fill: none; stroke: #999; stroke-width: 1.500; stroke-dasharray: 2 2; }
.s-dash { fill: none; stroke: #2e3096; stroke-width: 2; stroke-dasharray: 4 2; }
.s-dots { fill: none; stroke: #222; stroke-width: 1.200; stroke-dasharray: 1.500 1.500; }
.s-navy { fill: none; stroke: #3d3d9e; stroke-width: 1.800; }
.s-navyb { fill: none; stroke: #3d3fa5; stroke-width: 2.400; }
.s-navyw { fill: none; stroke: #3f56a6; stroke-width: 2.200; }
.s-chain { fill: #ccc; stroke: #444; stroke-width: 1.300; }
.chain-bg { fill: #bbb; }
.s-heavy { fill: none; stroke: #222; stroke-width: 2.800; }
.s-pink { fill: none; stroke: #333; stroke-width: 2.800; }
.s-pinkw { fill: none; stroke: #c9848a; stroke-width: 3; }
.s-bluedash { fill: none; stroke: #2630d8; stroke-width: 1.300; stroke-dasharray: 2 2; }
.s-maroon { fill: none; stroke: #8e2a45; stroke-width: 2.400; }
.s-reddash { fill: none; stroke: #e08a8a; stroke-width: 1.200; stroke-dasharray: 2 2; }
.s-red { fill: none; stroke: #d62020; stroke-width: 2.200; }
.s-redfat { fill: none; stroke: #c9283a; stroke-width: 2.600; stroke-dasharray: 2.500 1.500; }
.s-violet { fill: none; stroke: #4a4ae0; stroke-width: 2; }
.s-ring { fill: none; stroke: #444; stroke-width: 2; }
.s-wave { fill: none; stroke: #416798; stroke-width: 2.400; }
.s-split { fill: none; stroke: #888; stroke-width: 1; }
.wave-bg { fill: #b4c7dc; }
.s-brown { fill: none; stroke: #b39a90; stroke-width: 1.800; stroke-dasharray: 3 2; }
.s-arc { fill: none; stroke: #a05a60; stroke-width: 2; }
.s-doc { fill: none; stroke: #3f70b8; stroke-width: 1.200; }
.s-grid { fill: none; stroke: #111; stroke-width: 2; }
.s-magenta { fill: none; stroke: #a02aa0; stroke-width: 2; stroke-dasharray: 3 2; }
.s-zig { fill: none; stroke: #1f3fc8; stroke-width: 2.600; }
.s-zig2 { fill: none; stroke: #4c63c0; stroke-width: 2.400; }
.s-gtree { fill: #d8ecd8; stroke: #8cc49a; stroke-width: 1.500; }
.node { fill: #e9b72c; stroke: #9c7a1e; stroke-width: .8; }
.ynode { fill: #f2dc3c; stroke: #a08a20; stroke-width: .6; }
.dot { fill: #000; }
.red-dot { fill: #e01010; }
.green { fill: #4cc04c; }
.green-dot { fill: #2ce02c; }
.ptr { fill: #fff; stroke: #000; stroke-width: 1.400; }
.ptr-grey { fill: #fff; stroke: #888; stroke-width: 1.200; }
.doc { fill: #eef4fc; stroke: #4f82c8; stroke-width: 1.400; }
.doc-fold { fill: #cfe0f5; stroke: #4f82c8; stroke-width: 1.200; }
.folder { fill: #f7cf5e; stroke: #dcaf45; }
.folder-back { fill: #fbe08c; stroke: #dcaf45; }
.pic-pale { fill: #d8e4ee; stroke: #b8c0c8; }
.pic-sky { fill: #a9dbe8; stroke: #9cc; }
.ring-grey { fill: none; stroke: #aaa; stroke-width: 1.500; }
.bird-dark { fill: #4a3a3a; }
.floppy { fill: #6f90c4; stroke: #5a7cb2; }
.floppy-red { fill: #ef8f78; }
.floppy-white { fill: #eef3fa; }
.floppy-dark { fill: #4f75ae; }
.sel-box { fill: #f2f2f2; stroke: #888; stroke-width: 2; }
.sel-grid { fill: none; stroke: #aaa; stroke-width: 1.500; }
.blade { fill: none; stroke: #9ba6b4; stroke-width: 2.200; }
.clip { fill: #8fa6d8; stroke: #5d78b5; }
.clip-top { fill: #dce4f2; stroke: #5d6a86; }
.undo { fill: #5f8fc8; stroke: #4a78b2; stroke-width: .8; }
.bird { fill: #b88a8c; stroke: #111; stroke-width: 1.300; }
.check { fill: #2f6da0; }
.pencil { fill: #d82020; stroke: #7a1010; stroke-width: .8; }
.pic-frame { fill: #eef6fc; stroke: #666; stroke-width: 2; }
.pic-frame2 { fill: #eef6fc; stroke: #778; stroke-width: 2; }
.pic-band { fill: #a8d4f4; }
.fit-frame { fill: #fff; stroke: #f0b8b8; stroke-width: 2; }
.cd-box { fill: #ddd; stroke: #111; stroke-width: 1.800; }
.pan { fill: #b4b4b4; stroke: #555; stroke-width: 1.200; }
.lens { fill: #b9bcd8; stroke: #8a8a8a; stroke-width: 2.500; }
.handle { fill: none; stroke: #6a4cc0; stroke-width: 3.500; }
.bulb { fill: #ffe020; stroke: #c8a010; }
.tree { fill: #9d9d86; }
.split { fill: #aab0c8; stroke: #6a7398; stroke-width: 1.500; }
.split-top { fill: #5a6aa8; }
.split-grey { fill: #d0d0d0; stroke: #777; }
.gold { fill: #c8a030; }

/* text inside icons */
.t-big { font-family: "Liberation Serif", serif; font-size: 34px; font-weight: 700; fill: #2e3096; text-anchor: middle; }
.t-outline { font-family: "Liberation Serif", serif; font-size: 32px; fill: #d0d0d0; stroke: #222; stroke-width: .8; text-anchor: middle; }
.t-ab { font-family: "Liberation Sans", sans-serif; font-size: 10px; fill: #667; }
.t-abc { font-family: "Liberation Sans", sans-serif; font-size: 11px; font-weight: 700; fill: #444; }
.t-q { font-family: "Liberation Sans", sans-serif; font-size: 15px; fill: #222; text-anchor: middle; }
.t-tile { font-family: "Liberation Sans", sans-serif; font-size: 9px; fill: #111; text-anchor: middle; }
.t-zig { font-family: "Liberation Serif", serif; font-size: 18px; font-weight: 700; fill: #2f5590; }
.t-zig2 { font-family: "Liberation Serif", serif; font-size: 12px; font-weight: 700; fill: #2f5590; }
```

FILE: mosaic.js
```javascript
// traced background image, one letter per pixel: [first column, letters], spaces are only for reading
const colours = {
    "0": "#000", "1": "#151513", "2": "#232320", "3": "#343432", "4": "#484844", "5": "#595955",
    "6": "#696966", "7": "#797976", "8": "#888886", "9": "#979794", a: "#a3a39f", b: "#b0b0ab",
    v: "#9a9f95", w: "#a9aea4", s: "#5e625a", n: "#2a2b33", t: "#4a4248", p: "#5a4f5a", m: "#7b6e7b",
    g: "#031006", r: "#170303", u: "#03051a"
};

const rows = [
    [[18, "4887 9a9a aaa9 9988 8855 6888 899a aaaa"]],
    [[17, "1 7988 99va waa9 a877 6200 2s98 8899 aaaa"]],
    [[17, "2 8888 v9aw aa99 a742 00g0 14a8 999a aaba"]],
    [[9, "g0000000 s898 9vva baaa a8n0 0g00 002a 8889 9awa a"]],
    [[11, "g00g01 6888 9vva aaa9 9720 0000 0019 9999 aaww a"]],
    [[16, "2 9778 999w waa9 9510 0g00 0018 9999 aaaa a"]],
    [[13, "g0gt a778 99aa aw99 8300 0000 0016 8788 8aaa v"]],
    [[12, "gr01 s v889 8vav aa99 730g 0g00 00gp 8788 8aaa 8"]],
    [[12, "g003 8 889v 99v9 v999 7201 0000 0004 9789 va9a v"]],
    [[14, "16v 889a 9988 8889 5101 0g00 0003 9799 9a99 9"]],
    [[10, "1000 279 888a a878 8888 4000 0000 0g03 9789 9988 8"]],
    [[11, "1016 88 9999 8988 88a7 n000 000g 0011 7888 9888 7"]],
    [[11, "g026 87 88aa 9887 8785 2000 0000 00g1 7887 7778 8"]],
    [[10, "1004 888 8a98 8889 8885 1000 u000 0001 6877 8999 8"]],
    [[10, "1016 988 8a74 33ts 6885 00gr 0000 0000 5889 8887 8"]],
    [[12, "38 v88 8as1 0001 23s3 0000 g000 0000 3787 6522 4"]],
    [[12, "59 8v8 9940 1u10 0121 0g00 0000 0000 0232 1110 3"]],
    [[11, "169 889 a810 g010 1000 00g0"], [48, "13"]],
    [[9, "10n7 8888 9710 1000 g0g1 u1"], [42, "1001 00gt"]],
    [[11, "47a889a4"], [49, "5"]],
    [[11, "48988993"], [49, "s"]],
    [[9, "g0588889 51000u"], [49, "s"]],
    [[11, "6v889 82g 000g"], [49, "s"]],
    [[11, "78899s1"], [49, "s"]],
    [[10, "gm88a73 00g00g"], [49, "4"]],
    [[11, "888851 00u"], [49, "3"]],
    [[10, "g78883 0g0g 00g01"], [49, "2"]],
    [[10, "3 89a51"], [49, "1"]],
    [[7, "ug0t99a51"]],
    [[6, "g0126a9a5"]]
];

const nodes = [
    [698, 1023], [742, 655], [907, 283], [839, 957], [954.7, 712.3], [959, 582], [1131.7, 574.3],
    [1194.7, 612], [1248.3, 619.3], [1301.3, 298], [1415, 167.7], [1587.7, 194.3], [1589, 451.3],
    [1620.3, 612], [1803.7, 619.3], [1823, 559.3]
];
const handles = [
    [[698, 1023], [756.3, 963]], [[742, 655], [692.3, 768]], [[742, 655], [791, 540]], [[907, 283], [848, 434.7]],
    [[907, 283], [944, 187.3]], [[839, 957], [806.7, 1026.7]], [[839, 957], [878, 876]],
    [[954.7, 712.3], [924.7, 797.7]], [[954.7, 712.3], [969.7, 672]], [[959, 582], [927.7, 610.3]],
    [[959, 582], [998, 545.7]], [[1131.7, 574.3], [1080.3, 562.3]], [[1131.7, 574.3], [1155.7, 580.3]],
    [[1194.7, 612], [1172.3, 604.3]], [[1194.7, 612], [1211, 618]], [[1248.3, 619.3], [1247, 637.3]],
    [[1248.3, 619.3], [1263.3, 503.7]], [[1301.3, 298], [1308.7, 406]], [[1301.3, 298], [1296.3, 232.3]],
    [[1415, 167.7], [1343, 200.7]], [[1587.7, 194.3], [1578.7, 166]], [[1587.7, 194.3], [1611.7, 262]],
    [[1589, 451.3], [1560.7, 370.3]], [[1589, 451.3], [1611.7, 514.3]], [[1620.3, 612], [1568.3, 598.3]],
    [[1620.3, 612], [1680.7, 628.3]], [[1803.7, 619.3], [1739, 639]], [[1803.7, 619.3], [1826, 613.3]],
    [[1823, 559.3], [1802.3, 571.3]], [[1823, 559.3], [1844, 547.3]], [[1854.7, 811.7], [1861, 860]]
];
const curves = [
    [698, 1023, 756.3, 963, 692.3, 768, 742, 655],
    [742, 655, 791, 540, 848, 434.7, 907, 283],
    [907, 283, 944, 187.3, 950, 170, 958, 130],
    [825, 1040, 822, 1000, 830, 980, 839, 957],
    [839, 957, 878, 876, 924.7, 797.7, 954.7, 712.3],
    [954.7, 712.3, 969.7, 672, 927.7, 610.3, 959, 582],
    [959, 582, 998, 545.7, 1080.3, 562.3, 1131.7, 574.3],
    [1131.7, 574.3, 1155.7, 580.3, 1172.3, 604.3, 1194.7, 612],
    [1194.7, 612, 1211, 618, 1247, 637.3, 1248.3, 619.3],
    [1248.3, 619.3, 1263.3, 503.7, 1308.7, 406, 1301.3, 298],
    [1301.3, 298, 1296.3, 232.3, 1343, 200.7, 1415, 167.7],
    [1415, 167.7, 1465, 132, 1570, 160, 1587.7, 194.3],
    [1587.7, 194.3, 1611.7, 262, 1560.7, 370.3, 1589, 451.3],
    [1589, 451.3, 1611.7, 514.3, 1568.3, 598.3, 1620.3, 612],
    [1620.3, 612, 1680.7, 628.3, 1739, 639, 1803.7, 619.3],
    [1803.7, 619.3, 1826, 613.3, 1802.3, 571.3, 1823, 559.3],
    [1823, 559.3, 1844, 547.3, 1850, 548, 1865, 562]
];

const canvas = document.getElementById("view");
const ctx = canvas.getContext("2d");
const originX = 413;
const originY = 157;

ctx.fillStyle = "#000";
ctx.fillRect(0, 0, canvas.width, canvas.height);

rows.forEach((runs, r) => {
    const top = Math.round(142 + 29.75 * r - originY);
    const bottom = Math.round(142 + 29.75 * (r + 1) - originY);
    runs.forEach(([start, letters]) => {
        [...letters.replace(/ /g, "")].forEach((letter, i) => {
            const c = start + i;
            const left = Math.round(389.6 + 29.77 * c - originX);
            const right = Math.round(389.6 + 29.77 * (c + 1) - originX);
            ctx.fillStyle = colours[letter];
            ctx.fillRect(left, top, right - left, bottom - top);
        });
    });
});

ctx.translate(-originX, -originY);

ctx.strokeStyle = "#f20000";
ctx.lineWidth = 1.6;
curves.forEach(c => {
    ctx.beginPath();
    ctx.moveTo(c[0], c[1]);
    ctx.bezierCurveTo(c[2], c[3], c[4], c[5], c[6], c[7]);
    ctx.stroke();
});

ctx.strokeStyle = "#1b8b8d";
ctx.lineWidth = 1.5;
handles.forEach(([from, to]) => {
    ctx.beginPath();
    ctx.moveTo(from[0], from[1]);
    ctx.lineTo(to[0], to[1]);
    ctx.stroke();
    ctx.strokeRect(Math.round(to[0]) - 4.5, Math.round(to[1]) - 4.5, 9, 9);
});

ctx.fillStyle = "#0000e4";
nodes.forEach(([x, y]) => {
    ctx.fillRect(Math.round(x) - 5, Math.round(y) - 5, 10, 10);
});
```
